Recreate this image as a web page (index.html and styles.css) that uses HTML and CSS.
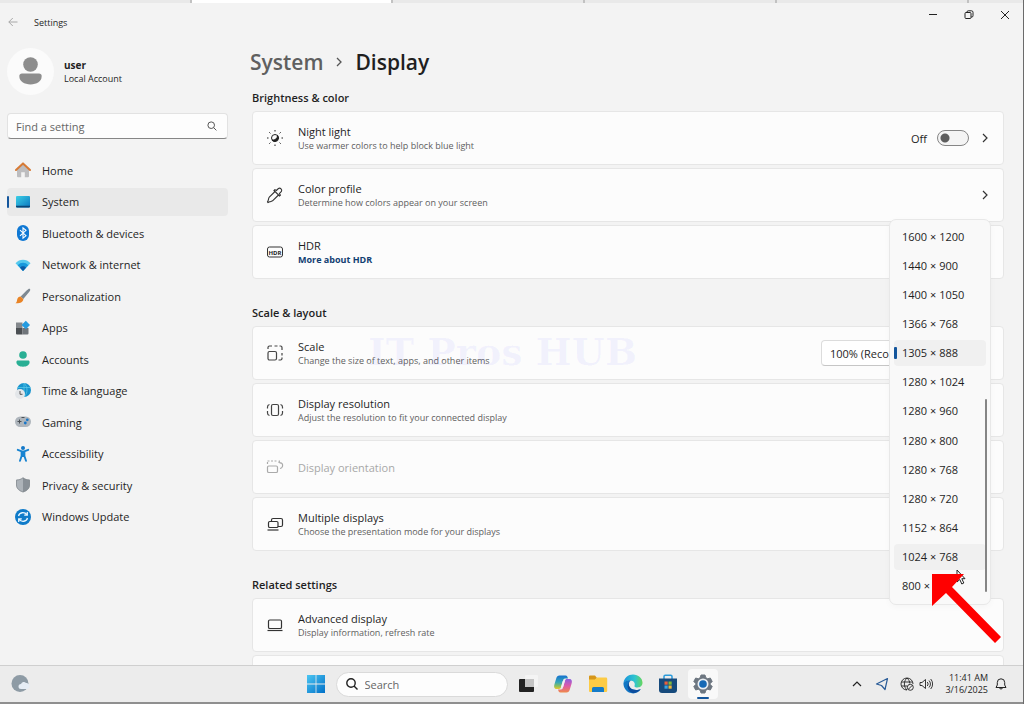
FILE: index.html
```html
<!DOCTYPE html>
<html lang="en">
<head>
    <meta charset="UTF-8">
    <title>Settings</title>
    <link rel="stylesheet" href="styles.css">
</head>
<body>
    <div class="tab-strip">
        <span class="tab"></span>
        <span class="tab active"></span>
        <span class="tab"></span>
        <span class="tab"></span>
        <span class="tab"></span>
        <span class="tab last"></span>
    </div>

    <div class="window">
        <aside class="sidebar">
            <div class="title-bar">
                <button class="back" aria-label="Back">
                    <svg width="10" height="10" viewBox="0 0 10 10" fill="none" stroke="#a8a8a8"><path d="M9.500 5H.8M4.800 1 .8 5l4 4"/></svg>
                </button>
                <span>Settings</span>
            </div>

            <div class="account">
                <svg width="47" height="47" viewBox="0 0 47 47">
                    <circle cx="23.500" cy="23.500" r="23.500" fill="#fbfbfb"/>
                    <circle cx="23.500" cy="16.500" r="7.300" fill="#8d8d8d"/>
                    <path d="M15 25.500h17c1.600 0 2.700 1 2.700 2.600 0 5.500-5 8.400-11.200 8.400s-11.200-2.900-11.200-8.400c0-1.600 1.100-2.600 2.700-2.600z" fill="#8d8d8d"/>
                </svg>
                <div>
                    <div class="user-name">user</div>
                    <div>Local Account</div>
                </div>
            </div>

            <div class="find">
                <input type="text" placeholder="Find a setting" aria-label="Find a setting">
                <svg width="10" height="10" viewBox="0 0 10 10" fill="none" stroke="#555"><circle cx="4.200" cy="4.200" r="3.300"/><path d="M6.600 6.600 9.400 9.400"/></svg>
            </div>

            <nav>
                <a href="#home">
                    <svg width="16" height="16" viewBox="0 0 16 16">
                        <path d="M2 7 8 1.800 14 7v7.300a1 1 0 0 1-1 1H9.800v-5H6.200v5H3a1 1 0 0 1-1-1z" fill="#bdbdbf"/>
                        <path d="M1 8 8 1.400 15 8" fill="none" stroke="#d77a35" stroke-width="2" stroke-linecap="round" stroke-linejoin="round"/>
                    </svg>
                    Home
                </a>
                <a href="#system" class="current">
                    <svg width="16" height="16" viewBox="0 0 16 16">
                        <defs><linearGradient id="screen" x2="1" y2="1"><stop stop-color="#3cd0e6"/><stop offset="1" stop-color="#0a76c0"/></linearGradient></defs>
                        <rect x="1" y="2" width="14" height="11.500" rx="1" fill="url(#screen)"/>
                        <path d="M1 11.700h14v.8a1 1 0 0 1-1 1H2a1 1 0 0 1-1-1z" fill="#0b4576"/>
                    </svg>
                    System
                </a>
                <a href="#bluetooth">
                    <svg width="16" height="16" viewBox="0 0 16 16">
                        <rect x="2" y="0" width="12" height="16" rx="6" fill="#0f78d4"/>
                        <path d="M5 5.200l6 5.500-3 2.500V2.800l3 2.500-6 5.500" fill="none" stroke="#fff" stroke-width="1.100"/>
                    </svg>
                    Bluetooth &amp; devices
                </a>
                <a href="#network">
                    <svg width="16" height="16" viewBox="0 0 16 16">
                        <path d="M.5 6.200C4.500 1.700 11.500 1.700 15.500 6.200L8 14z" fill="#55c9ed"/>
                        <path d="M2.700 8.300C5.500 5 10.500 5 13.300 8.300L8 14z" fill="#1699dc"/>
                        <path d="M5 10.700C6.600 8.800 9.400 8.800 11 10.700L8 14z" fill="#0b5ba5"/>
                    </svg>
                    Network &amp; internet
                </a>
                <a href="#personalization">
                    <svg width="16" height="16" viewBox="0 0 16 16">
                        <path d="M14.800.8c1 .8.2 2.200-.5 3L8.300 11 5.600 8.600l6.500-6.500C13 1.200 14 .3 14.800.8z" fill="#7e8992"/>
                        <path d="M5.600 8.600 8.300 11c.2 3-3.300 4.600-7.800 4.300 1.400-.8 1.300-2 1.700-3.800.4-1.800 1.700-2.900 3.400-2.900z" fill="#e98426"/>
                    </svg>
                    Personalization
                </a>
                <a href="#apps">
                    <svg width="16" height="16" viewBox="0 0 16 16">
                        <path d="M1 2.500h6.500V8H1z" fill="#84888c"/>
                        <path d="M1 8h6.500v6.500H2a1 1 0 0 1-1-1z" fill="#4b4f53"/>
                        <path d="M7.500 8h6v5.500a1 1 0 0 1-1 1h-5z" fill="#70757a"/>
                        <path d="M10.800.8 15 5l-4.200 4.200L6.600 5z" fill="#249be0"/>
                    </svg>
                    Apps
                </a>
                <a href="#accounts">
                    <svg width="16" height="16" viewBox="0 0 16 16" fill="#29af94">
                        <circle cx="8" cy="4" r="3.800"/>
                        <path d="M3 9.400h10c1 0 1.600.7 1.600 1.600C14.600 14 11.800 15.700 8 15.700S1.400 14 1.400 11c0-.9.6-1.600 1.600-1.600z"/>
                    </svg>
                    Accounts
                </a>
                <a href="#time">
                    <svg width="16" height="16" viewBox="0 0 16 16">
                        <circle cx="9" cy="7" r="7" fill="#1793cd"/>
                        <path d="M9 0v14M2.500 4.500h13M9 0c4 4 4 10 0 14" stroke="#57c6e8" stroke-width=".8" fill="none"/>
                        <circle cx="5" cy="11" r="5" fill="#e3e6e9"/>
                        <path d="M5 8v3.300h2.500" stroke="#555" fill="none"/>
                    </svg>
                    Time &amp; language
                </a>
                <a href="#gaming">
                    <svg width="16" height="16" viewBox="0 0 16 16">
                        <rect x="0" y="2.500" width="16" height="10.500" rx="5.200" fill="#aeb5bc"/>
                        <path d="M4.500 5.500v4M2.500 7.500h4M6.500 3.500h3" stroke="#494f55"/>
                        <circle cx="12.300" cy="5.800" r="1.400" fill="#1976c8"/><circle cx="10.300" cy="9" r="1.400" fill="#1976c8"/>
                    </svg>
                    Gaming
                </a>
                <a href="#accessibility">
                    <svg width="16" height="16" viewBox="0 0 16 16">
                        <circle cx="8" cy="2" r="2" fill="#1479c9"/>
                        <path d="M2.800 3.800 6.800 5.400h2.400l4-1.600M8 6v4M6.600 6v4L5 14.800M9.400 6v4l1.600 4.800" fill="none" stroke="#1683d1" stroke-width="1.900" stroke-linecap="round" stroke-linejoin="round"/>
                    </svg>
                    Accessibility
                </a>
                <a href="#privacy">
                    <svg width="16" height="16" viewBox="0 0 16 16">
                        <path d="M8 .5c2 1.500 4.200 2.200 6.800 2.300V8c0 3.800-3 6-6.800 7.300z" fill="#899097"/>
                        <path d="M8 .5C6 2 3.800 2.700 1.200 2.800V8c0 3.800 3 6 6.800 7.300z" fill="#adb3b9"/>
                        <path d="M8 .8c2 1.500 4 2.200 6.500 2.300V8c0 3.500-2.900 5.700-6.500 7-3.600-1.300-6.500-3.500-6.500-7V3.100C4 3 6 2.300 8 .8z" fill="none" stroke="#858b91" stroke-width=".8"/>
                    </svg>
                    Privacy &amp; security
                </a>
                <a href="#update">
                    <svg width="16" height="16" viewBox="0 0 16 16">
                        <circle cx="8" cy="8" r="8" fill="#0f7bc9"/>
                        <path d="M3.500 7C4.500 3.200 9.500 2.500 12 5.800M12.300 3v3.200H9.200M12.500 9c-1 3.800-6 4.500-8.500 1.200M3.700 13V9.800h3.100" fill="none" stroke="#e8f6ff" stroke-width="1.300"/>
                    </svg>
                    Windows Update
                </a>
            </nav>
        </aside>

        <div class="pane">
            <div class="caption-buttons">
                <button aria-label="Minimize"><svg width="10" height="10" viewBox="0 0 10 10" fill="none" stroke="#222"><path d="M1 4.500h8"/></svg></button>
                <button aria-label="Restore"><svg width="10" height="10" viewBox="0 0 10 10" fill="none" stroke="#222"><rect x="1" y="2.500" width="6" height="6" rx="1"/><path d="M3 2.500V2A1.200 1.200 0 0 1 4.200.8H7.500A1.500 1.500 0 0 1 9 2.300v3.400A1.200 1.200 0 0 1 7.800 7H7"/></svg></button>
                <button aria-label="Close"><svg width="10" height="10" viewBox="0 0 10 10" fill="none" stroke="#222"><path d="m1 1 8 8M9 1 1 9"/></svg></button>
            </div>

            <main>
                <h1>
                    <a href="#system">System</a>
                    <svg width="8" height="10" viewBox="0 0 8 10" fill="none" stroke="#555" stroke-width="1.300"><path d="m2 1 4 4-4 4"/></svg>
                    <span>Display</span>
                </h1>

                <section>
                    <h2>Brightness &amp; color</h2>
                    <div class="card">
                        <svg width="18" height="18" viewBox="0 0 18 18" fill="none" stroke="#222">
                            <circle cx="9" cy="9" r="3.500"/>
                            <path d="M11.500 6.500A3.500 3.500 0 1 1 6 11a4.500 4.500 0 0 0 5.500-4.500z" fill="#222"/>
                            <path d="M9 1v1.500M9 15.500V17M1 9h1.500M15.500 9H17M3.300 3.300l1.100 1.100M13.600 13.600l1.100 1.100M3.300 14.700l1.100-1.100M13.600 4.400l1.100-1.100"/>
                        </svg>
                        <div class="text">
                            <h3>Night light</h3>
                            <p>Use warmer colors to help block blue light</p>
                        </div>
                        <label class="toggle">Off <input type="checkbox"></label>
                        <svg class="chevron" width="8" height="10" viewBox="0 0 8 10"><path d="m2 1 4 4-4 4"/></svg>
                    </div>
                    <div class="card">
                        <svg width="18" height="18" viewBox="0 0 18 18" fill="none" stroke="#333" stroke-width="1.100">
                            <path d="M9 5.500 3.300 11.200c-.9.900-.6 2-1.100 3.200L1.500 16l.5.500 1.600-.7c1.200-.5 2.300-.2 3.200-1.100L12.500 9M8 4.500l5.500 5.500.9-.9-1-1.600 2-2a2.200 2.200 0 0 0-3-3l-2 2-1.500-.9z"/>
                        </svg>
                        <div class="text">
                            <h3>Color profile</h3>
                            <p>Determine how colors appear on your screen</p>
                        </div>
                        <svg class="chevron" width="8" height="10" viewBox="0 0 8 10"><path d="m2 1 4 4-4 4"/></svg>
                    </div>
                    <div class="card">
                        <svg width="18" height="18" viewBox="0 0 18 18">
                            <rect x="1.500" y="4" width="15" height="10" rx="2" fill="none" stroke="#333"/>
                            <text x="9" y="11.500" class="hdr-mark">HDR</text>
                        </svg>
                        <div class="text">
                            <h3>HDR</h3>
                            <a href="#hdr">More about HDR</a>
                        </div>
                    </div>
                </section>

                <section>
                    <h2>Scale &amp; layout</h2>
                    <div class="card">
                        <svg width="18" height="18" viewBox="0 0 18 18" fill="none" stroke="#444" stroke-width="1.200">
                            <rect x="2" y="7.500" width="8.500" height="8.500" rx="1.500"/>
                            <path d="M2 5V3.500A1.500 1.500 0 0 1 3.500 2H6M8.500 2h3M13.500 2h1A1.500 1.500 0 0 1 16 3.500V6M16 9v2.500M16 13.500v1a1.500 1.500 0 0 1-1.500 1.500H12.500"/>
                        </svg>
                        <div class="text">
                            <h3>Scale</h3>
                            <p>Change the size of text, apps, and other items</p>
                        </div>
                        <select class="scale" aria-label="Scale">
                            <option>100% (Recommended)</option>
                        </select>
                        <svg class="chevron" width="8" height="10" viewBox="0 0 8 10"><path d="m2 1 4 4-4 4"/></svg>
                        <div class="watermark">IT Pros HUB</div>
                    </div>
                    <div class="card resolution">
                        <svg width="18" height="18" viewBox="0 0 18 18" fill="none" stroke="#444" stroke-width="1.200">
                            <rect x="5.500" y="3.500" width="7" height="11" rx="1.500"/>
                            <path d="M3.500 3.500A2.500 2.500 0 0 0 1.500 6v1.500M1.500 10v2a2.500 2.500 0 0 0 2 2.500M14.500 3.500a2.500 2.500 0 0 1 2 2.500v1.500M16.500 10v2a2.500 2.500 0 0 1-2 2.500"/>
                        </svg>
                        <div class="text">
                            <h3>Display resolution</h3>
                            <p>Adjust the resolution to fit your connected display</p>
                        </div>

                        <div class="popup">
                            <div class="options" role="listbox" aria-label="Display resolution">
                                <button role="option">1600 × 1200</button>
                                <button role="option">1440 × 900</button>
                                <button role="option">1400 × 1050</button>
                                <button role="option">1366 × 768</button>
                                <button role="option" class="selected" aria-selected="true">1305 × 888</button>
                                <button role="option">1280 × 1024</button>
                                <button role="option">1280 × 960</button>
                                <button role="option">1280 × 800</button>
                                <button role="option">1280 × 768</button>
                                <button role="option">1280 × 720</button>
                                <button role="option">1152 × 864</button>
                                <button role="option" class="hover">1024 × 768</button>
                                <button role="option">800 × 600</button>
                            </div>
                            <div class="scroll-thumb"></div>
                            <svg class="pointer" width="10" height="16" viewBox="0 0 10 16"><path d="M1 1v12l2.800-2.500 2 4.500 2-1-2-4.300H9z" fill="#fff" stroke="#222"/></svg>
                            <svg class="arrow" width="70" height="70" viewBox="0 0 70 70"><path d="M0 0h32L20 13l49 50-6 6-49-50L0 32z" fill="#f00"/></svg>
                        </div>
                    </div>
                    <div class="card disabled">
                        <svg width="18" height="18" viewBox="0 0 18 18" fill="none" stroke="#aaa" stroke-width="1.200">
                            <rect x="1.500" y="8" width="10" height="6.500" rx="1.300"/>
                            <path d="M1.500 6V3.500M1.500 3H12" stroke-dasharray="2 1.500"/>
                            <path d="M13.500 2.500 13 4.500l2 .8M13.200 4.500c2.800 0 3.800 2 3.300 3.800-.3 1-1.200 2-2.500 2.200"/>
                        </svg>
                        <div class="text"><h3>Display orientation</h3></div>
                    </div>
                    <div class="card">
                        <svg width="18" height="18" viewBox="0 0 18 18" fill="none" stroke="#333" stroke-width="1.200">
                            <path d="M5.500 6.500V5A1.500 1.500 0 0 1 7 3.500h8A1.500 1.500 0 0 1 16.500 5v5a1.500 1.500 0 0 1-1.500 1.500h-3"/>
                            <rect x="2.500" y="6.500" width="9.500" height="6" rx="1.300"/><path d="M1.500 15h11"/>
                        </svg>
                        <div class="text">
                            <h3>Multiple displays</h3>
                            <p>Choose the presentation mode for your displays</p>
                        </div>
                    </div>
                </section>

                <section>
                    <h2>Related settings</h2>
                    <div class="card">
                        <svg width="18" height="18" viewBox="0 0 18 18" fill="none" stroke="#333" stroke-width="1.200"><rect x="2.500" y="4" width="13" height="8.500" rx="1.300"/><path d="M1.500 14.500h15"/></svg>
                        <div class="text">
                            <h3>Advanced display</h3>
                            <p>Display information, refresh rate</p>
                        </div>
                    </div>
                    <div class="card"></div>
                </section>
            </main>
        </div>
    </div>

    <footer class="taskbar">
        <button class="weather" aria-label="Weather">
            <svg width="20" height="20" viewBox="0 0 20 20">
                <circle cx="9" cy="9.500" r="8.500" fill="#8e9ba5"/>
                <path d="M10 15a2.500 2.500 0 0 1 0-5 3 3 0 0 1 5-1 3 3 0 0 1 1 6z" fill="#e6edf5"/>
            </svg>
        </button>

        <div class="apps">
            <button aria-label="Start">
                <svg width="20" height="20" viewBox="0 0 20 20">
                    <defs><linearGradient id="win" x2="1" y2="1"><stop stop-color="#4cc6f2"/><stop offset="1" stop-color="#0070c8"/></linearGradient></defs>
                    <path d="M1 1h8.600v8.600H1zM10.400 1H19v8.600h-8.600zM1 10.400h8.600V19H1zM10.400 10.400H19V19h-8.600z" fill="url(#win)"/>
                </svg>
            </button>
            <div class="search">
                <svg width="12" height="12" viewBox="0 0 12 12" fill="none" stroke="#222" stroke-width="1.400"><circle cx="5" cy="5" r="4.200"/><path d="m8 8 3.500 3.500"/></svg>
                <input type="text" placeholder="Search" aria-label="Search">
            </div>
            <button aria-label="Task view">
                <svg width="20" height="20" viewBox="0 0 20 20">
                    <rect x="1" y="5" width="15" height="13" rx="1" fill="#222"/>
                    <rect x="7" y="1" width="13" height="12" rx="1" fill="#f4f4f4"/>
                    <path d="M7 5h9v8H7z" fill="#c4c4c4"/>
                </svg>
            </button>
            <button aria-label="Copilot">
                <svg width="20" height="20" viewBox="0 0 20 20">
                    <defs>
                        <linearGradient id="cpa" x2="0" y2="1"><stop stop-color="#1672cf"/><stop offset=".5" stop-color="#35a6b8"/><stop offset=".8" stop-color="#8fc05a"/><stop offset="1" stop-color="#edc62f"/></linearGradient>
                        <linearGradient id="cpb" x2="0" y2="1"><stop stop-color="#8b5fe0"/><stop offset=".5" stop-color="#dd5aa8"/><stop offset="1" stop-color="#f08a4a"/></linearGradient>
                    </defs>
                    <path d="M13.500 18.500h-6c-1.800 0-2.100-1.500-2.500-3H8c1 0 1.600-.8 1.900-1.700L12 6.700C12.300 5.600 13 5 14 5h2.500c2.500 0 2.700 2.500 2.100 4.500l-1.800 6c-.5 1.800-1.600 3-3.300 3z" fill="url(#cpb)"/>
                    <path d="M6.500 1.500h6c1.800 0 2.100 1.500 2.500 3H12c-1 0-1.600.8-1.900 1.700L8 13.300C7.700 14.400 7 15 6 15H3.500C1 15 .8 12.500 1.400 10.500l1.800-6C3.700 2.700 4.800 1.500 6.500 1.500z" fill="url(#cpa)"/>
                    <path d="M9.800 7h2l-1.700 6h-2z" fill="#f3eff5"/>
                </svg>
            </button>
            <button aria-label="File Explorer">
                <svg width="20" height="20" viewBox="0 0 20 20">
                    <path d="M1 2.500a1 1 0 0 1 1-1h5l2 2.500-2 2H1z" fill="#d6961a"/>
                    <path d="M1 5.500h6L9 3.500h9a1.200 1.200 0 0 1 1.200 1.200v12A1.300 1.300 0 0 1 18 18H2a1 1 0 0 1-1-1z" fill="#fccb45"/>
                    <path d="M4 18v-3.500A1.500 1.500 0 0 1 5.500 13h9a1.500 1.500 0 0 1 1.500 1.500V18z" fill="#147bc8"/>
                </svg>
            </button>
            <button aria-label="Edge">
                <svg width="20" height="20" viewBox="0 0 20 20">
                    <defs><linearGradient id="edge" x2="1"><stop stop-color="#1a93dc"/><stop offset=".6" stop-color="#2fc5cf"/><stop offset="1" stop-color="#67d65b"/></linearGradient></defs>
                    <path d="M.5 9C1.200 3.700 5.200.5 10 .5c5.500 0 9.500 3.800 9.500 8.300 0 3-2.300 4.700-5 4.700-2 0-3.500-.7-3-1.800.8-1.500.3-4.500-3-5C5 6 1.800 7 .5 9z" fill="url(#edge)"/>
                    <path d="M.5 9C2 6.500 5.500 5.800 8 6.600c-3 1.400-2.800 5.300-.5 7.500 2.600 2.500 7.500 2.400 10.300.9C14.500 21 6 20.500 2.500 15.500.8 13.200.3 11 .5 9z" fill="#1176c4"/>
                    <path d="M8 6.600c-3 1.400-2.800 5.300-.5 7.500 2.600 2.500 7.500 2.400 10.300.9-2 3.200-5.800 4.300-8.300 4C4 17.500 2.600 9.500 8 6.600z" fill="#0c4c9c"/>
                </svg>
            </button>
            <button aria-label="Store">
                <svg width="20" height="20" viewBox="0 0 20 20">
                    <path d="M6 5V2.500A1.300 1.300 0 0 1 7.300 1.200h5.400A1.300 1.300 0 0 1 14 2.500V5" fill="none" stroke="#2b9bdb" stroke-width="1.500"/>
                    <path d="M1 4.500h18V16a3 3 0 0 1-3 3H4a3 3 0 0 1-3-3z" fill="#164a7c"/>
                    <path d="M6.500 7.500h3.200v3.200H6.500z" fill="#e8603c"/><path d="M10.500 7.500h3.200v3.200h-3.200z" fill="#83b93c"/>
                    <path d="M6.500 11.500h3.200v3.200H6.500z" fill="#39a3df"/><path d="M10.500 11.500h3.200v3.200h-3.200z" fill="#efb83b"/>
                </svg>
            </button>
            <button class="running" aria-label="Settings">
                <svg width="20" height="20" viewBox="0 0 20 20">
                    <path d="m8 1-.7 2.600-2 1.200-2.600-.8L.8 7.500 2.700 9.400v1.200L.8 12.500 2.700 16l2.600-.8 2 1.200L8 19h4l.7-2.600 2-1.200 2.600.8 1.900-3.500-1.900-1.900V9.400l1.900-1.900L17.300 4l-2.600.8-2-1.200L12 1z" fill="#6d7680" stroke="#6d7680" stroke-linejoin="round"/>
                    <circle cx="10" cy="10" r="5.500" fill="#e9eef3"/><circle cx="10" cy="10" r="3.800" fill="#1669b5"/>
                </svg>
            </button>
        </div>

        <div class="tray">
            <button class="more" aria-label="Show hidden icons"><svg width="14" height="14" viewBox="0 0 14 14" fill="none" stroke="#222" stroke-width="1.200"><path d="m3 9 4-4 4 4"/></svg></button>
            <button class="location" aria-label="Location"><svg width="14" height="14" viewBox="0 0 14 14" fill="none" stroke="#2a5c98" stroke-width="1.200" stroke-linejoin="round"><path d="M12.500 1.500 1.500 7l5 1.500 3.500 4z"/></svg></button>
            <button aria-label="Network"><svg width="14" height="14" viewBox="0 0 14 14" fill="none" stroke="#222" stroke-width=".9"><path d="M7 13A6 6 0 1 1 13 7M1.500 5h11M1.500 9H7M7 1C3.500 4 3.500 10 7 13M7 1c1.800 1.600 2.700 3.500 2.800 5.500"/><circle cx="10.300" cy="10.300" r="3"/><path d="m8.300 12.300 4-4"/></svg></button>
            <button aria-label="Volume"><svg width="14" height="14" viewBox="0 0 14 14" fill="none" stroke="#222" stroke-width=".9"><path d="M1 5.500v3h2L6.500 11.500v-9L3 5.500zM8.300 5a3 3 0 0 1 0 4M10 3.500a5 5 0 0 1 0 7M11.700 2a7.500 7.500 0 0 1 0 10"/></svg></button>
            <button class="clock">11:41 AM<br>3/16/2025</button>
            <button class="bell" aria-label="Notifications"><svg width="12" height="14" viewBox="0 0 12 14" fill="none" stroke="#222"><path d="M1 10.500 2.300 8V5.500a3.700 3.700 0 0 1 7.400 0V8L11 10.500zM4.500 10.500a1.500 1.500 0 0 0 3 0"/></svg></button>
        </div>
    </footer>
</body>
</html>
```
FILE: styles.css
```css
* {
    box-sizing: border-box;
}
body {
    margin: 0;
    height: 100vh;
    display: flex;
    flex-direction: column;
    overflow: hidden;
    font-family: "Open Sans", "Noto Sans", sans-serif;
    font-size: 11px;
    color: #1f1f1f;
    background: #f3f3f3;
    border-right: 1px solid #6b6b6b;
}
button, input, select {
    font: inherit;
    color: inherit;
}
button {
    padding: 0;
    border: 0;
    background: none;
    display: flex;
    align-items: center;
    justify-content: center;
}
svg {
    flex: none;
    display: block;
}
a {
    color: inherit;
    text-decoration: none;
}
h1, h2, h3, p {
    margin: 0;
    font-weight: 400;
}

/* browser tabs peeking out above the window */
.tab-strip {
    flex: 0 0 3px;
    display: flex;
    background: #e9e9e9;
}
.tab {
    flex: 39;
    border-right: 2px solid #c2c2c2;
}
.tab.active {
    flex: 41;
    background: #fff;
}
.tab.last {
    flex: 0 0 54px;
    border-right: 0;
}

.window {
    flex: 1;
    min-height: 0;
    display: flex;
}

/* sidebar */
.sidebar {
    flex: 0 0 228px;
    padding-left: 7px;
}
.title-bar {
    height: 38px;
    padding-left: 1px;
    display: flex;
    align-items: center;
    gap: 16px;
    font-size: 9px;
}
.account {
    margin-top: 7px;
    display: flex;
    align-items: center;
    gap: 10px;
    font-size: 9px;
    line-height: 14px;
}
.user-name {
    font-size: 10px;
    font-weight: 700;
}
.find {
    margin-top: 18px;
    height: 26px;
    padding: 0 10px 0 8px;
    display: flex;
    align-items: center;
    background: #fdfdfd;
    border: 1px solid #e2e2e2;
    border-bottom-color: #868686;
    border-radius: 4px;
}
.find input, .search input {
    flex: 1;
    min-width: 0;
    padding: 0;
    border: 0;
    background: none;
    outline: 0;
}
input::placeholder {
    color: #666;
    opacity: 1;
}
nav {
    margin-top: 17px;
    height: 375px;
    display: flex;
    flex-direction: column;
    justify-content: space-between;
}
nav a {
    position: relative;
    height: 28px;
    padding-left: 8px;
    display: flex;
    align-items: center;
    gap: 11px;
    border-radius: 4px;
}
nav a.current {
    background: #e9e9e9;
}
nav a.current::before {
    content: "";
    position: absolute;
    left: 0;
    top: 8px;
    width: 2px;
    height: 12px;
    border-radius: 1px;
    background: #14569c;
}

/* content */
.pane {
    flex: 1;
    min-width: 0;
    display: flex;
    flex-direction: column;
    overflow: hidden;
}
.caption-buttons {
    display: flex;
    justify-content: flex-end;
}
.caption-buttons button {
    width: 36px;
    height: 24px;
}
main {
    flex: 1;
    min-height: 0;
    padding: 18px 19px 0 22px;
}
h1 {
    display: flex;
    align-items: center;
    gap: 12px;
    font-size: 21px;
    line-height: 34px;
    font-weight: 600;
}
h1 a {
    color: #5f5f5f;
}
section {
    display: flex;
    flex-direction: column;
    gap: 3px;
    margin: 0 0 26px 2px;
}
h1 + section {
    margin-top: 11px;
}
h2 {
    margin-bottom: 2px;
    font-size: 11px;
    line-height: 16px;
    font-weight: 600;
}
.card {
    position: relative;
    height: 54px;
    padding: 0 14px 0 13px;
    display: flex;
    align-items: center;
    gap: 12px;
    background: #fcfcfc;
    border: 1px solid #e6e6e6;
    border-radius: 4px;
}
.card .text {
    flex: 1;
    padding: 2px 0 0 2px;
    font-size: 9px;
    line-height: 14px;
    color: #606060;
}
.card h3 {
    font-size: 11px;
    color: #1f1f1f;
}
.card .text a {
    display: block;
    font-weight: 700;
    color: #123f72;
}
.card.disabled h3 {
    color: #a8a8a8;
}
.chevron {
    fill: none;
    stroke: #333;
    stroke-width: 1.2;
}
.hdr-mark {
    font-size: 6px;
    font-weight: 700;
    text-anchor: middle;
    fill: #222;
}
.toggle {
    display: flex;
    align-items: center;
    gap: 10px;
}
.toggle input {
    appearance: none;
    width: 32px;
    height: 16px;
    margin: 0;
    border: 1px solid #858585;
    border-radius: 8px;
    background: radial-gradient(circle at 7px 7px, #5d5d5d 4px, #f4f4f4 5px);
}
.scale {
    appearance: none;
    width: 148px;
    height: 26px;
    padding: 0 8px;
    background: #fff;
    border: 1px solid #dcdcdc;
    border-bottom-color: #c6c6c6;
    border-radius: 4px;
}
.watermark {
    position: absolute;
    left: 115px;
    top: 5px;
    font-family: "DejaVu Serif", serif;
    font-size: 38px;
    font-weight: 700;
    line-height: 40px;
    white-space: nowrap;
    color: rgba(90, 90, 255, 0.06);
    pointer-events: none;
}

/* resolution list, opened over the cards */
.resolution {
    z-index: 1;
}
.popup {
    position: absolute;
    right: 12px;
    top: -165px;
    width: 102px;
    height: 386px;
    padding: 3px 4px 5px;
    background: #f9f9f9;
    border: 1px solid #e8e8e8;
    border-radius: 7px;
    box-shadow: 0 2px 6px rgba(0, 0, 0, 0.03);
}
.options {
    height: 100%;
    display: flex;
    flex-direction: column;
    justify-content: space-between;
}
.options button {
    position: relative;
    height: 26px;
    padding-left: 8px;
    justify-content: flex-start;
    border-radius: 4px;
}
.options .selected, .options .hover {
    background: #f0f0f0;
}
.options .selected::before {
    content: "";
    position: absolute;
    left: 0;
    top: 7px;
    width: 3px;
    height: 12px;
    border-radius: 1px;
    background: #14569c;
}
.scroll-thumb {
    position: absolute;
    right: 3px;
    top: 179px;
    width: 2px;
    height: 193px;
    border-radius: 1px;
    background: #858585;
}
.pointer {
    position: absolute;
    left: 66px;
    top: 349px;
}
.arrow {
    position: absolute;
    left: 42px;
    top: 354px;
}

/* taskbar */
.taskbar {
    position: relative;
    z-index: 2;
    flex: 0 0 39px;
    display: grid;
    grid-template-columns: 1fr auto 1fr;
    align-items: center;
    background: #ececec;
    border-top: 1px solid #cfcfcf;
    border-bottom: 2px solid #8f8f8f;
}
.weather {
    justify-self: start;
    margin-left: 11px;
}
.apps {
    display: flex;
    align-items: center;
    gap: 5px;
    padding-right: 5px;
}
.apps button {
    width: 30px;
    height: 30px;
    border-radius: 4px;
}
.search {
    width: 172px;
    height: 25px;
    padding: 0 9px;
    display: flex;
    align-items: center;
    gap: 7px;
    background: #fdfdfd;
    border: 1px solid #dadada;
    border-radius: 13px;
}
.apps .running {
    position: relative;
    background: #f9f9f9;
}
.running::after {
    content: "";
    position: absolute;
    left: 9px;
    bottom: 0;
    width: 12px;
    height: 2px;
    border-radius: 1px;
    background: #14569c;
}
.tray {
    justify-self: end;
    display: flex;
    align-items: center;
    gap: 5px;
    margin-right: 16px;
}
.more {
    margin-right: 6px;
}
.location {
    margin-right: 6px;
}
.clock {
    margin: 0 2px 0 7px;
    font-size: 9px;
    line-height: 12px;
    text-align: right;
}
```
